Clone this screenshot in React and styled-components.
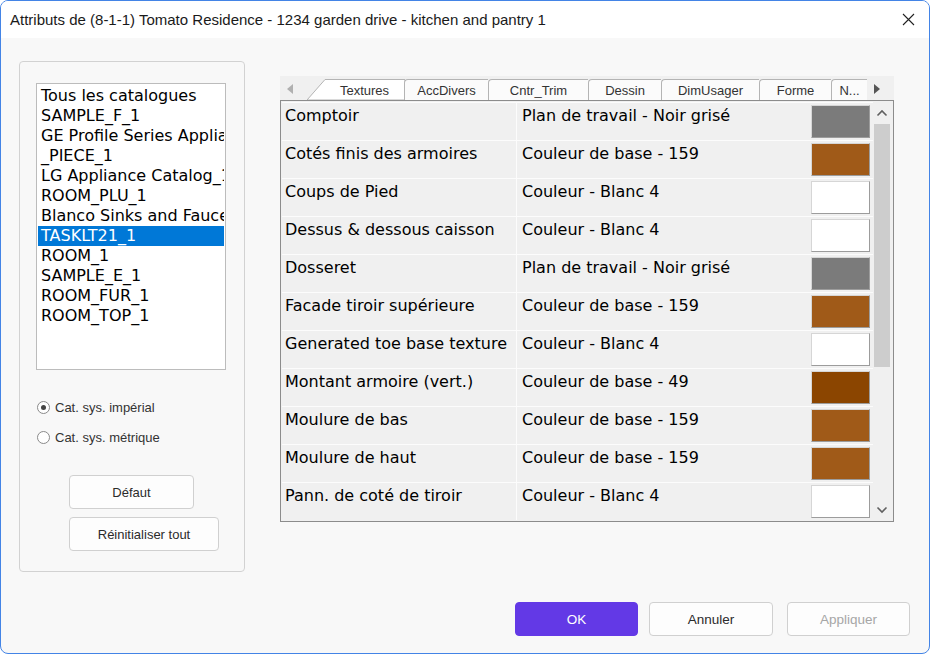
import styled, { createGlobalStyle } from 'styled-components'

const GlobalStyle = createGlobalStyle`
  body {
    margin: 0;
    background: #ffffff;
  }
  * {
    box-sizing: border-box;
  }
`

const brown = '#a05a18'
const gray = '#7b7b7b'
const white = '#ffffff'

const catalogues = [
  'Tous les catalogues',
  'SAMPLE_F_1',
  'GE Profile Series Appliances',
  '_PIECE_1',
  'LG Appliance Catalog_1',
  'ROOM_PLU_1',
  'Blanco Sinks and Faucets',
  'TASKLT21_1',
  'ROOM_1',
  'SAMPLE_E_1',
  'ROOM_FUR_1',
  'ROOM_TOP_1',
]

const tabs = [
  { label: 'Textures', width: 98 },
  { label: 'AccDivers', width: 84 },
  { label: 'Cntr_Trim', width: 100 },
  { label: 'Dessin', width: 73 },
  { label: 'DimUsager', width: 98 },
  { label: 'Forme', width: 72 },
  { label: 'N...', width: 36 },
]

const attributs = [
  ['Comptoir', 'Plan de travail - Noir grisé', gray],
  ['Cotés finis des armoires', 'Couleur de base - 159', brown],
  ['Coups de Pied', 'Couleur - Blanc 4', white],
  ['Dessus & dessous caisson', 'Couleur - Blanc 4', white],
  ['Dosseret', 'Plan de travail - Noir grisé', gray],
  ['Facade tiroir supérieure', 'Couleur de base - 159', brown],
  ['Generated toe base texture', 'Couleur - Blanc 4', white],
  ['Montant armoire (vert.)', 'Couleur de base - 49', '#8b4500'],
  ['Moulure de bas', 'Couleur de base - 159', brown],
  ['Moulure de haut', 'Couleur de base - 159', brown],
  ['Pann. de coté de tiroir', 'Couleur - Blanc 4', white],
]

const Window = styled.div`
  width: 930px;
  height: 654px;
  border: 1px solid #4384e6;
  border-radius: 8px;
  overflow: hidden;
  display: flex;
  flex-direction: column;
  background: #f8f8f8;
  font-family: 'Liberation Sans', Arial, sans-serif;
`

const TitleBar = styled.div`
  height: 37px;
  background: #ffffff;
  display: flex;
  align-items: center;
  justify-content: space-between;
  padding: 0 14px 0 9px;
  font-size: 15px;
  color: #1a1a1a;
`

const CloseButton = styled.div`
  width: 14px;
  height: 14px;
  display: flex;
  align-items: center;
  justify-content: center;
`

const Body = styled.div`
  flex: 1;
  display: flex;
  flex-direction: column;
  padding: 23px 19px 0 18px;
`

const Main = styled.div`
  display: flex;
  align-items: flex-start;
  gap: 35px;
`

const GroupBox = styled.div`
  width: 226px;
  height: 511px;
  border: 1px solid #d2d2d2;
  border-radius: 4px;
  padding: 21px 17px 0 16px;
  display: flex;
  flex-direction: column;
`

const ListBox = styled.div`
  width: 190px;
  height: 287px;
  background: #ffffff;
  border: 1px solid #bcbcbc;
  padding: 2px 1px 1px;
  overflow: hidden;
`

const ListItem = styled.div`
  height: 20px;
  line-height: 20px;
  padding-left: 3px;
  font-family: 'DejaVu Sans', sans-serif;
  font-size: 16px;
  white-space: nowrap;
  overflow: hidden;
  color: ${(p) => (p.$selected ? '#ffffff' : '#000000')};
  background: ${(p) => (p.$selected ? '#0078d7' : 'transparent')};
`

const RadioGroup = styled.div`
  display: flex;
  flex-direction: column;
  gap: 14px;
  margin-top: 29px;
  padding-left: 1px;
`

const RadioRow = styled.label`
  display: flex;
  align-items: center;
  gap: 5px;
  height: 16px;
  font-size: 13px;
  color: #333333;
`

const RadioCircle = styled.span`
  width: 13px;
  height: 13px;
  border-radius: 50%;
  border: 1px solid #8a8a8a;
  background: #ffffff;
  display: flex;
  align-items: center;
  justify-content: center;

  &::after {
    content: '';
    width: 5px;
    height: 5px;
    border-radius: 50%;
    background: ${(p) => (p.$checked ? '#444444' : 'transparent')};
  }
`

const SideButtons = styled.div`
  display: flex;
  flex-direction: column;
  gap: 8px;
  margin-top: 30px;
  padding-left: 33px;
`

const Button = styled.button`
  width: ${(p) => p.$width}px;
  height: 34px;
  border-radius: 4px;
  border: 1px solid ${(p) => (p.$primary ? '#6339e6' : '#d0d0d0')};
  background: ${(p) => (p.$primary ? '#6339e6' : '#fdfdfd')};
  color: ${(p) => (p.$primary ? '#ffffff' : p.disabled ? '#a6a6a6' : '#2b2b2b')};
  font-family: 'Liberation Sans', Arial, sans-serif;
  font-size: ${(p) => p.$size || 13}px;
  padding: 0;
`

const TabPanel = styled.div`
  width: 614px;
  margin-top: 15px;
  display: flex;
  flex-direction: column;
`

const TabStrip = styled.div`
  height: 24px;
  background: #f0f0f0;
  display: flex;
  align-items: flex-end;
`

const Arrow = styled.div`
  width: ${(p) => p.$width}px;
  height: 24px;
  display: flex;
  align-items: center;
  padding: 2px 0 0 7px;
`

const Tab = styled.div`
  position: relative;
  width: ${(p) => p.$width}px;
  height: 21px;
  padding-left: ${(p) => (p.$first ? 18 : 0)}px;
  display: flex;
  align-items: center;
  justify-content: center;
  font-size: 13px;
  color: #333333;
  background: ${(p) => (p.$first ? 'transparent' : '#fbfbfb')};
  border-top: 1px solid ${(p) => (p.$first ? 'transparent' : '#b4b4b4')};
  border-left: 1px solid ${(p) => (p.$first ? 'transparent' : '#b4b4b4')};
  border-top-left-radius: 4px;

  &:last-of-type {
    border-right: 1px solid #b4b4b4;
  }
`

const FirstTabShape = styled.div`
  position: absolute;
  top: -1px;
  left: 0;
  width: 100%;
  height: 21px;
  z-index: 0;
`

const TabLabel = styled.span`
  position: relative;
  z-index: 1;
`

const Grid = styled.div`
  height: 422px;
  border: 1px solid #8c8c8c;
  background: #f0f0f0;
  display: flex;
  padding-top: 1px;
`

const Rows = styled.div`
  flex: 1;
  display: flex;
  flex-direction: column;
  padding-left: 1px;
`

const Row = styled.div`
  height: 38px;
  display: flex;
  border-top: 1px solid #fcfcfc;
  font-family: 'DejaVu Sans', sans-serif;
  font-size: 16px;
  line-height: 19px;
  color: #000000;
`

const NameCell = styled.div`
  width: 235px;
  padding: 3px 0 0 3px;
  border-right: 1px solid #fcfcfc;
  white-space: nowrap;
  overflow: hidden;
`

const ValueCell = styled.div`
  flex: 1;
  padding: 3px 0 0 5px;
  white-space: nowrap;
`

const SwatchCell = styled.div`
  width: 64px;
  padding: 2px 0 0 2px;
`

const Swatch = styled.div`
  width: 59px;
  height: 33px;
  background: ${(p) => p.$color};
  border: 1px solid;
  border-color: #d6d6d6 #9c9c9c #9c9c9c #d6d6d6;
`

const ScrollBar = styled.div`
  width: 18px;
  margin-right: 2px;
  margin-top: -1px;
  display: flex;
  flex-direction: column;
  align-items: center;
  background: #f0f0f0;
`

const ScrollButton = styled.div`
  height: 23px;
  width: 100%;
  display: flex;
  align-items: center;
  justify-content: center;
`

const ScrollTrack = styled.div`
  flex: 1;
  width: 100%;
  padding: 0 1px;
`

const ScrollThumb = styled.div`
  height: 243px;
  background: #cdcdcd;
`

const Footer = styled.div`
  display: flex;
  justify-content: flex-end;
  margin-top: 30px;
`

const FooterGap = styled.div`
  width: ${(p) => p.$width}px;
`

function Chevron({ up }) {
  return (
    <svg width="12" height="8" viewBox="0 0 12 8">
      <polyline
        points={up ? '1.5,6.5 6,2 10.5,6.5' : '1.5,1.5 6,6 10.5,1.5'}
        fill="none"
        stroke="#606060"
        strokeWidth="1.6"
      />
    </svg>
  )
}

function App() {
  return (
    <Window>
      <GlobalStyle />
      <TitleBar>
        <span>Attributs de (8-1-1) Tomato Residence - 1234 garden drive - kitchen and pantry 1</span>
        <CloseButton>
          <svg width="13" height="13" viewBox="0 0 13 13">
            <path d="M1 1 L12 12 M12 1 L1 12" stroke="#222" strokeWidth="1.1" />
          </svg>
        </CloseButton>
      </TitleBar>
      <Body>
        <Main>
          <GroupBox>
            <ListBox>
              {catalogues.map((cat, index) => (
                <ListItem key={`cat-${index}`} $selected={cat === 'TASKLT21_1'}>
                  {cat}
                </ListItem>
              ))}
            </ListBox>
            <RadioGroup>
              <RadioRow>
                <RadioCircle $checked />
                Cat. sys. impérial
              </RadioRow>
              <RadioRow>
                <RadioCircle />
                Cat. sys. métrique
              </RadioRow>
            </RadioGroup>
            <SideButtons>
              <Button $width={125}>Défaut</Button>
              <Button $width={150}>Réinitialiser tout</Button>
            </SideButtons>
          </GroupBox>

          <TabPanel>
            <TabStrip>
              <Arrow $width={26}>
                <svg width="6" height="10" viewBox="0 0 6 10">
                  <polygon points="6,0 0,5 6,10" fill="#b0b0b0" />
                </svg>
              </Arrow>
              {tabs.map((tab, index) => (
                <Tab key={tab.label} $width={tab.width} $first={index === 0}>
                  {index === 0 && (
                    <FirstTabShape>
                      <svg width={tab.width} height="21" viewBox={`0 0 ${tab.width} 21`}>
                        <polygon
                          points={`0,21 18,0.5 ${tab.width},0.5 ${tab.width},21`}
                          fill="#ffffff"
                          stroke="#b4b4b4"
                          strokeWidth="1"
                        />
                      </svg>
                    </FirstTabShape>
                  )}
                  <TabLabel>{tab.label}</TabLabel>
                </Tab>
              ))}
              <Arrow $width={27}>
                <svg width="6" height="10" viewBox="0 0 6 10">
                  <polygon points="0,0 6,5 0,10" fill="#555555" />
                </svg>
              </Arrow>
            </TabStrip>
            <Grid>
              <Rows>
                {attributs.map(([name, value, color], index) => (
                  <Row key={`row-${index}`}>
                    <NameCell>{name}</NameCell>
                    <ValueCell>{value}</ValueCell>
                    <SwatchCell>
                      <Swatch $color={color} />
                    </SwatchCell>
                  </Row>
                ))}
              </Rows>
              <ScrollBar>
                <ScrollButton>
                  <Chevron up />
                </ScrollButton>
                <ScrollTrack>
                  <ScrollThumb />
                </ScrollTrack>
                <ScrollButton>
                  <Chevron />
                </ScrollButton>
              </ScrollBar>
            </Grid>
          </TabPanel>
        </Main>
        <Footer>
          <Button $primary $width={123} $size={13.5}>
            OK
          </Button>
          <FooterGap $width={11} />
          <Button $width={124} $size={13.5}>
            Annuler
          </Button>
          <FooterGap $width={14} />
          <Button $width={123} $size={13.5} disabled>
            Appliquer
          </Button>
        </Footer>
      </Body>
    </Window>
  )
}

export default App
